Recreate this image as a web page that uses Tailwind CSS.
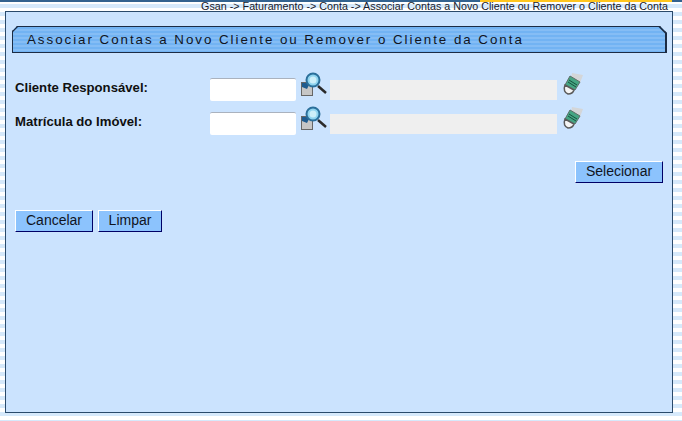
<!DOCTYPE html>
<html><head><meta charset="utf-8"><script src="https://cdn.jsdelivr.net/npm/@tailwindcss/browser@4"></script></head>
<body class="w-[682px] h-[421px] overflow-hidden bg-white font-['Liberation_Sans',Arial,sans-serif]">
<div class="relative h-[421px] bg-[repeating-linear-gradient(180deg,#ffffff_0px,#ffffff_4px,#d6e9fb_4px,#d6e9fb_8px)]">
  <div class="flex h-[2px]"><div class="w-[480px] bg-[#33628f]"></div><div class="w-[192px] bg-[#ffc61e]"></div><div class="flex-1 bg-[#33628f]"></div></div>
  <div class="ml-[5px] mr-[9px] h-[9px] relative"><p class="absolute right-[5px] top-[0px] text-[10.74px] leading-[9px] text-[#1a1a2a] whitespace-nowrap">Gsan -&gt; Faturamento -&gt; Conta -&gt; Associar Contas a Novo Cliente ou Remover o Cliente da Conta</p></div>
  <main class="ml-[5px] w-[668px] h-[402px] border border-[#2a4a6b] bg-[#cbe3fe] pt-[14px] px-[6px]">
    <div class="relative w-[655px] h-[27px] border border-r-2 border-[#1c2c44] bg-[repeating-linear-gradient(180deg,#72b3f3_0px,#72b3f3_2px,#85bdf5_2px,#85bdf5_4px)] [clip-path:polygon(5px_0,calc(100%-7px)_0,100%_7px,100%_100%,0_100%,0_5px)] flex items-center pl-[14px]">
      <svg class="absolute left-[-1px] top-[-1px]" width="7" height="7" viewBox="0 0 7 7"><path d="M0 6L6 0" stroke="#1c2c44" stroke-width="1.5"/></svg>
      <svg class="absolute right-[-2px] top-[-1px]" width="9" height="9" viewBox="0 0 9 9"><path d="M1 0L9 8" stroke="#1c2c44" stroke-width="2"/></svg>
      <h1 class="text-[13.33px] leading-none tracking-[1.97px] text-[#10141e] font-normal whitespace-nowrap">Associar Contas a Novo Cliente ou Remover o Cliente da Conta</h1>
    </div>
    <div class="mt-[25px] flex flex-col gap-[11px] pl-[3px]">
      <div class="flex items-start h-[23px]">
        <label class="w-[195px] pt-[1px] text-[13.15px] font-bold text-[#101010] leading-[17px]">Cliente Responsável:</label>
        <div class="w-[86px] h-[23px] bg-white rounded-[2px] border-t border-[#aab2be]"></div>
        <svg class="ml-[4px] mt-[-6px]" width="27" height="27" viewBox="0 0 27 27"><rect x="1.5" y="10.5" width="11" height="13" fill="#c6c6c6" stroke="#666"/><path d="M2 11h8l-3 6-5-2z" fill="#1f5b8f"/><path d="M18 14l8 7" stroke="#2a2a2a" stroke-width="2.5"/><circle cx="13" cy="8" r="6.5" fill="#8fd4ef" stroke="#2b6f9a" stroke-width="2"/><circle cx="13" cy="8" r="3.5" fill="#cdeff9"/></svg>
        <div class="ml-[3px] mt-[2px] w-[227px] h-[20px] bg-[#efefef]"></div>
        <svg class="ml-[5px] mt-[-6px]" width="22" height="24" viewBox="0 0 22 24"><path d="M10 1l11 2-3 8-9-4z" fill="#d4d6d8"/><path d="M8 4l10 6-5 8-10-5z" fill="#45a583" stroke="#5f6f68"/><path d="M7 8l8 5M6 10l8 5" stroke="#17513d" stroke-width="1"/><path d="M3 13l9 5c-1 3-3 4-6 4-3-1-5-4-3-9z" fill="#f4f4f4" stroke="#5a5a5a" stroke-width="1.5"/></svg>
      </div>
      <div class="flex items-start h-[23px]">
        <label class="w-[195px] pt-[1px] text-[13.15px] font-bold text-[#101010] leading-[17px]">Matrícula do Imóvel:</label>
        <div class="w-[86px] h-[23px] bg-white rounded-[2px] border-t border-[#aab2be]"></div>
        <svg class="ml-[4px] mt-[-6px]" width="27" height="27" viewBox="0 0 27 27"><rect x="1.5" y="10.5" width="11" height="13" fill="#c6c6c6" stroke="#666"/><path d="M2 11h8l-3 6-5-2z" fill="#1f5b8f"/><path d="M18 14l8 7" stroke="#2a2a2a" stroke-width="2.5"/><circle cx="13" cy="8" r="6.5" fill="#8fd4ef" stroke="#2b6f9a" stroke-width="2"/><circle cx="13" cy="8" r="3.5" fill="#cdeff9"/></svg>
        <div class="ml-[3px] mt-[2px] w-[227px] h-[20px] bg-[#efefef]"></div>
        <svg class="ml-[5px] mt-[-6px]" width="22" height="24" viewBox="0 0 22 24"><path d="M10 1l11 2-3 8-9-4z" fill="#d4d6d8"/><path d="M8 4l10 6-5 8-10-5z" fill="#45a583" stroke="#5f6f68"/><path d="M7 8l8 5M6 10l8 5" stroke="#17513d" stroke-width="1"/><path d="M3 13l9 5c-1 3-3 4-6 4-3-1-5-4-3-9z" fill="#f4f4f4" stroke="#5a5a5a" stroke-width="1.5"/></svg>
      </div>
    </div>
    <div class="mt-[26px] flex justify-end pr-[3px]">
      <button class="w-[88px] h-[22px] pb-[2px] bg-[#8cc3fd] border border-t-white border-l-white border-r-[#000066] border-b-[#000066] text-[14px] leading-none text-[#10141e]">Selecionar</button>
    </div>
    <div class="mt-[27px] flex gap-[5px] pl-[3px]">
      <button class="w-[78px] h-[22px] pb-[2px] bg-[#8cc3fd] border border-t-white border-l-white border-r-[#000066] border-b-[#000066] text-[14px] leading-none text-[#10141e]">Cancelar</button>
      <button class="w-[64px] h-[22px] pb-[2px] bg-[#8cc3fd] border border-t-white border-l-white border-r-[#000066] border-b-[#000066] text-[14px] leading-none text-[#10141e]">Limpar</button>
    </div>
  </main>
</div>
</body></html>
